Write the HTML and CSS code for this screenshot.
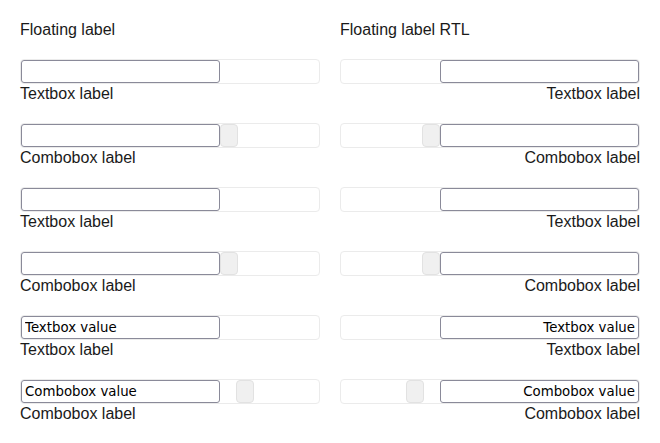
FILE: index.html
```html
<!DOCTYPE html>
<html>
<head>
<meta charset="utf-8">
<link rel="stylesheet" href="styles.css">
</head>
<body>
<div class="page">
  <section class="col">
    <h2 class="title">Floating label</h2>
    <div class="field"><div class="box"><input class="inp" type="text"></div><label class="lbl">Textbox label</label></div>
    <div class="field"><div class="box"><input class="inp" type="text"><span class="btn"></span></div><label class="lbl">Combobox label</label></div>
    <div class="field"><div class="box"><input class="inp" type="text"></div><label class="lbl">Textbox label</label></div>
    <div class="field"><div class="box"><input class="inp" type="text"><span class="btn"></span></div><label class="lbl">Combobox label</label></div>
    <div class="field"><div class="box"><input class="inp" type="text" value="Textbox value"></div><label class="lbl">Textbox label</label></div>
    <div class="field"><div class="box"><input class="inp" type="text" value="Combobox value"><span class="btn btn-shift"></span></div><label class="lbl">Combobox label</label></div>
  </section>
  <section class="col rtl">
    <h2 class="title ltr-title">Floating label RTL</h2>
    <div class="field"><div class="box"><input class="inp" type="text"></div><label class="lbl">Textbox label</label></div>
    <div class="field"><div class="box"><input class="inp" type="text"><span class="btn"></span></div><label class="lbl">Combobox label</label></div>
    <div class="field"><div class="box"><input class="inp" type="text"></div><label class="lbl">Textbox label</label></div>
    <div class="field"><div class="box"><input class="inp" type="text"><span class="btn"></span></div><label class="lbl">Combobox label</label></div>
    <div class="field"><div class="box"><input class="inp" type="text" value="Textbox value"></div><label class="lbl">Textbox label</label></div>
    <div class="field"><div class="box"><input class="inp" type="text" value="Combobox value"><span class="btn btn-shift"></span></div><label class="lbl">Combobox label</label></div>
  </section>
</div>
</body>
</html>
```

FILE: styles.css
```css
html, body {
  margin: 0;
  padding: 0;
  background: #ffffff;
}
body {
  font-family: "Liberation Sans", Arial, sans-serif;
  color: #1a1a1a;
}
.page {
  display: flex;
  gap: 20px;
  padding: 20px 20px 0 20px;
}
.col {
  width: 300px;
  display: flex;
  flex-direction: column;
  gap: 20px;
}
.rtl {
  direction: rtl;
}
.title {
  margin: 0;
  padding-top: 1px;
  font-size: 16px;
  font-weight: normal;
  line-height: 18px;
}
.ltr-title {
  direction: ltr;
  text-align: left;
}
.field {
  display: flex;
  flex-direction: column;
}
.box {
  box-sizing: border-box;
  height: 25px;
  border: 1px solid #ebebeb;
  border-radius: 4px;
  display: flex;
  align-items: stretch;
}
.inp {
  box-sizing: border-box;
  width: 199px;
  height: 23px;
  margin: 0;
  border: 1px solid #8a8a99;
  border-radius: 3px;
  padding: 0 3px;
  font-family: "DejaVu Sans", sans-serif;
  font-size: 13.33px;
  color: #000;
  background: #fff;
  outline: none;
}
.btn {
  box-sizing: border-box;
  width: 18px;
  height: 23px;
  background: #f0f0f0;
  border: 1px solid #e2e2e2;
  border-radius: 4px;
}
.btn-shift {
  margin-inline-start: 16px;
}
.lbl {
  padding-top: 1px;
  font-size: 16px;
  line-height: 18px;
}
```
